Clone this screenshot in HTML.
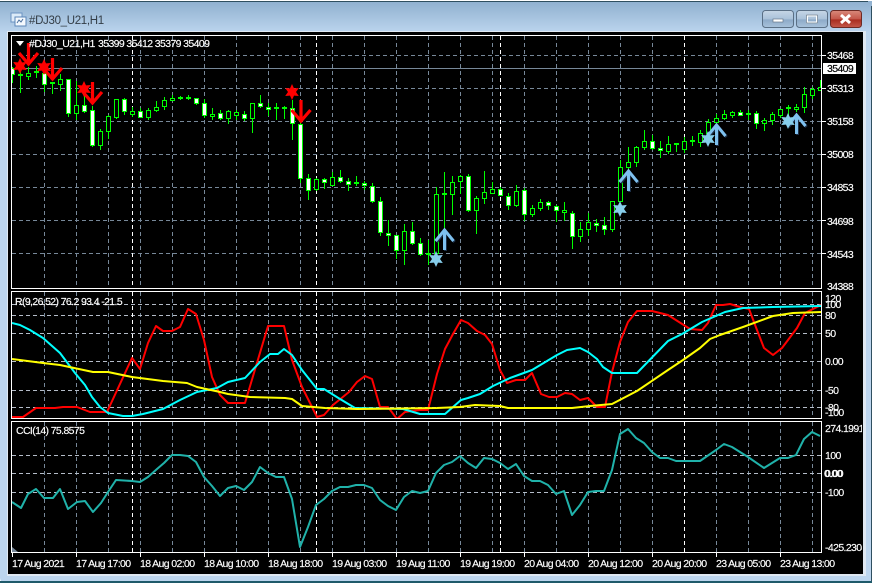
<!DOCTYPE html>
<html><head><meta charset="utf-8"><title>#DJ30_U21,H1</title>
<style>
html,body{margin:0;padding:0;background:#fff;width:874px;height:584px;overflow:hidden}
svg{display:block}
text{font-family:"Liberation Sans",sans-serif;font-size:10.5px;fill:#fff;stroke:#fff;stroke-width:.15px;letter-spacing:-.62px}
.k{fill:#000;stroke:#000}
</style></head><body>
<svg width="874" height="584" viewBox="0 0 874 584" xmlns="http://www.w3.org/2000/svg">
<defs>
<linearGradient id="tb" x1="0" y1="0" x2="0" y2="1"><stop offset="0" stop-color="#8fb0cf"/><stop offset="1" stop-color="#bcd5ee"/></linearGradient>
<linearGradient id="bt" x1="0" y1="0" x2="0" y2="1"><stop offset="0" stop-color="#c6d6e6"/><stop offset=".5" stop-color="#aac2da"/><stop offset=".55" stop-color="#8daac8"/><stop offset="1" stop-color="#a9c3dc"/></linearGradient>
<linearGradient id="cl" x1="0" y1="0" x2="0" y2="1"><stop offset="0" stop-color="#d98a7c"/><stop offset=".5" stop-color="#c4574a"/><stop offset=".55" stop-color="#a92d20"/><stop offset="1" stop-color="#c4584a"/></linearGradient>
<clipPath id="c1"><rect x="12" y="36" width="809" height="252"/></clipPath>
<clipPath id="c2"><rect x="12" y="292" width="809" height="126"/></clipPath>
<clipPath id="c3"><rect x="12" y="422" width="809" height="130"/></clipPath>
<clipPath id="c4"><rect x="822" y="420" width="40" height="140"/></clipPath>
<polygon id="star" points="0,-8 2,-3.6 6.8,-4 4,0 6.8,4 2,3.6 0,8 -2,3.6 -6.8,4 -4,0 -6.8,-4 -2,-3.6"/>
</defs>

<!-- window chrome -->
<rect width="874" height="584" fill="#fff"/>
<rect x="0" y="1" width="872" height="582" rx="5" fill="#bcd5ee"/>
<rect x="0" y="1" width="872" height="32" fill="url(#tb)"/>
<path d="M0 1.5H868M871.5 6V583M0 582.5H872" stroke="#2f4f60" fill="none"/>
<path d="M0 582H872" stroke="#1f5a6a" stroke-width="2"/>
<rect x="7" y="31" width="859" height="545" fill="#dfe8f2"/>
<rect x="8" y="32" width="855" height="542" fill="#000"/>

<!-- title icon & text -->
<g>
<rect x="11" y="13" width="11" height="9" fill="#dcebf8" stroke="#6b93c2"/>
<rect x="15" y="17" width="11" height="9" fill="#f4f9fe" stroke="#5c86b8"/>
<path d="M17 23l2-3 2 2 2-3" stroke="#4a6f9f" fill="none"/>
</g>
<text x="29" y="24" style="font-size:11.5px;fill:#333d46;stroke:none;letter-spacing:-.32px">#DJ30_U21,H1</text>

<!-- window buttons -->
<rect x="762.5" y="10.5" width="31" height="17" rx="3" fill="url(#bt)" stroke="#5a6f85"/>
<rect x="773" y="19" width="10" height="3" fill="#fff" stroke="#68788a" stroke-width=".7"/>
<rect x="796.5" y="10.5" width="31" height="17" rx="3" fill="url(#bt)" stroke="#5a6f85"/>
<rect x="807" y="15.5" width="10" height="7" fill="none" stroke="#fff" stroke-width="2"/>
<rect x="806.5" y="15" width="11" height="8" fill="none" stroke="#5f7286" stroke-width=".7"/>
<rect x="830.5" y="10.5" width="31" height="17" rx="3" fill="url(#cl)" stroke="#6d2a24"/>
<path d="M841 15l9 8M850 15l-9 8" stroke="#fff" stroke-width="3"/>

<!-- grids -->
<g fill="none" stroke="#778899" stroke-width="1" stroke-dasharray="4 3" shape-rendering="crispEdges">
<path d="M12 55.5H821M12 88.5H821M12 121.5H821M12 154.5H821M12 187.5H821M12 220.5H821M12 253.5H821"/>
<path d="M44.5 36V288M76.5 36V288M108.5 36V288M140.5 36V288M172.5 36V288M204.5 36V288M236.5 36V288M268.5 36V288M300.5 36V288M332.5 36V288M364.5 36V288M396.5 36V288M428.5 36V288M460.5 36V288M492.5 36V288M524.5 36V288M556.5 36V288M588.5 36V288M620.5 36V288M652.5 36V288M716.5 36V288M748.5 36V288M780.5 36V288M812.5 36V288"/>
<path d="M44.5 292V418M76.5 292V418M108.5 292V418M140.5 292V418M172.5 292V418M204.5 292V418M236.5 292V418M268.5 292V418M300.5 292V418M332.5 292V418M364.5 292V418M396.5 292V418M428.5 292V418M460.5 292V418M492.5 292V418M524.5 292V418M556.5 292V418M588.5 292V418M620.5 292V418M652.5 292V418M716.5 292V418M748.5 292V418M780.5 292V418M812.5 292V418"/>
<path d="M44.5 422V552M76.5 422V552M108.5 422V552M140.5 422V552M172.5 422V552M204.5 422V552M236.5 422V552M268.5 422V552M300.5 422V552M332.5 422V552M364.5 422V552M396.5 422V552M428.5 422V552M460.5 422V552M492.5 422V552M524.5 422V552M556.5 422V552M588.5 422V552M620.5 422V552M652.5 422V552M716.5 422V552M748.5 422V552M780.5 422V552M812.5 422V552"/>
</g>
<g fill="none" stroke="#b4bcc8" stroke-width="1" stroke-dasharray="4 3" shape-rendering="crispEdges">
<path d="M12 304.5H821M12 315.5H821M12 333.5H821M12 361.5H821M12 390.5H821M12 407.5H821"/>
<path d="M12 455.5H821M12 473.5H821M12 492.5H821"/>
</g>
<g fill="none" stroke="#fff" stroke-dasharray="4 3" shape-rendering="crispEdges">
<path d="M132.5 36V288M316.5 36V288M500.5 36V288M684.5 36V288M132.5 292V418M316.5 292V418M500.5 292V418M684.5 292V418M132.5 422V552M316.5 422V552M500.5 422V552M684.5 422V552"/>
</g>
<path d="M12 68.5H821" stroke="#778899" shape-rendering="crispEdges"/>

<!-- candles -->
<g clip-path="url(#c1)" shape-rendering="crispEdges">
<path fill="none" stroke="#00ff00" d="M12.5 67V83M20.5 66V93M28.5 67V80M36.5 66V78M44.5 66V92M52.5 82V94M60.5 74V91M68.5 79V117M76.5 81V120M84.5 90V113M92.5 106V147M100.5 129V150M108.5 115V139M116.5 99V119M124.5 98V115M132.5 107V117M140.5 108V118M148.5 108V120M156.5 101V112M164.5 97V110M172.5 95V101M180.5 96V100M188.5 95V100M196.5 98V105M204.5 99V118M212.5 108V120M220.5 110V120M228.5 110V124M236.5 110V120M244.5 111V121M252.5 103V133M260.5 95V108M268.5 103V116M276.5 103V120M284.5 106V119M292.5 100V140M300.5 120V183M308.5 174V200M316.5 178V191M324.5 178V189M332.5 172V186M340.5 170V183M348.5 178V191M356.5 176V186M364.5 181V190M372.5 183V203M380.5 197V236M388.5 220V246M396.5 235V259M404.5 224V265M412.5 222V245M420.5 238V256M428.5 240V265M436.5 187V255M444.5 172V240M452.5 176V215M460.5 175V194M468.5 174V212M476.5 196V234M484.5 171V204M492.5 182V193M500.5 187V196M508.5 193V210M516.5 185V207M524.5 188V221M532.5 205V217M540.5 199V211M548.5 201V210M556.5 205V222M564.5 202V221M572.5 211V249M580.5 222V242M588.5 213V236M596.5 219V232M604.5 217V235M612.5 201V232M620.5 160V202M628.5 147V170M636.5 146V167M644.5 130V150M652.5 135V150M660.5 141V158M668.5 136V154M676.5 143V152M684.5 137V153M692.5 136V146M700.5 130V147M708.5 119V135M716.5 114V124M724.5 110V120M732.5 111V118M740.5 110V116M748.5 110V120M756.5 111V129M764.5 118V131M772.5 112V125M780.5 109V118M788.5 105V118M796.5 104V112M804.5 87V113M812.5 87V99M820.5 80V90"/>
<path fill="none" stroke="#00ff00" stroke-width="2" d="M18 75H23M34 72H39M50 83H55M178 98H183M186 98H191M274 108H279M282 108H287M354 183H359M426 254H431M442 194H447M690 141H695M746 114H751M786 108H791"/>
<path fill="#000" stroke="#00ff00" d="M26.5 73.5h4v3h-4zM58.5 79.5h4v5h-4zM74.5 105.5h4v8h-4zM98.5 131.5h4v14h-4zM106.5 116.5h4v15h-4zM114.5 99.5h4v18h-4zM130.5 111.5h4v3h-4zM146.5 110.5h4v7h-4zM154.5 107.5h4v3h-4zM162.5 100.5h4v6h-4zM170.5 98.5h4v2h-4zM210.5 114.5h4v2h-4zM226.5 111.5h4v7h-4zM234.5 112.5h4v3h-4zM250.5 103.5h4v15h-4zM314.5 179.5h4v10h-4zM330.5 177.5h4v8h-4zM402.5 231.5h4v19h-4zM434.5 194.5h4v59h-4zM450.5 182.5h4v12h-4zM458.5 176.5h4v5h-4zM474.5 198.5h4v12h-4zM482.5 192.5h4v6h-4zM490.5 189.5h4v4h-4zM514.5 191.5h4v14h-4zM530.5 208.5h4v6h-4zM538.5 202.5h4v6h-4zM562.5 210.5h4v2h-4zM578.5 229.5h4v7h-4zM586.5 222.5h4v7h-4zM610.5 201.5h4v28h-4zM618.5 167.5h4v34h-4zM626.5 162.5h4v5h-4zM634.5 147.5h4v15h-4zM642.5 141.5h4v6h-4zM666.5 144.5h4v7h-4zM674.5 143.5h4v1h-4zM682.5 141.5h4v8h-4zM698.5 133.5h4v9h-4zM706.5 122.5h4v11h-4zM714.5 118.5h4v4h-4zM722.5 114.5h4v4h-4zM730.5 112.5h4v3h-4zM762.5 120.5h4v3h-4zM770.5 114.5h4v6h-4zM778.5 109.5h4v6h-4zM794.5 107.5h4v2h-4zM802.5 94.5h4v13h-4zM810.5 89.5h4v6h-4zM818.5 87.5h4v3h-4z"/>
<path fill="#fff" stroke="#00ff00" d="M10.5 68.5h4v6h-4zM42.5 73.5h4v11h-4zM66.5 79.5h4v34h-4zM82.5 105.5h4v6h-4zM90.5 110.5h4v35h-4zM122.5 99.5h4v12h-4zM138.5 111.5h4v6h-4zM194.5 98.5h4v5h-4zM202.5 103.5h4v12h-4zM218.5 113.5h4v5h-4zM242.5 114.5h4v4h-4zM258.5 103.5h4v3h-4zM266.5 107.5h4v2h-4zM290.5 108.5h4v15h-4zM298.5 124.5h4v54h-4zM306.5 178.5h4v12h-4zM322.5 179.5h4v3h-4zM338.5 177.5h4v4h-4zM346.5 181.5h4v3h-4zM362.5 183.5h4v2h-4zM370.5 186.5h4v15h-4zM378.5 201.5h4v31h-4zM386.5 233.5h4v2h-4zM394.5 235.5h4v15h-4zM410.5 231.5h4v12h-4zM418.5 243.5h4v11h-4zM466.5 176.5h4v34h-4zM498.5 189.5h4v6h-4zM506.5 196.5h4v9h-4zM522.5 190.5h4v24h-4zM546.5 202.5h4v3h-4zM554.5 206.5h4v4h-4zM570.5 213.5h4v23h-4zM594.5 223.5h4v2h-4zM602.5 225.5h4v4h-4zM650.5 141.5h4v7h-4zM658.5 148.5h4v2h-4zM738.5 112.5h4v3h-4zM754.5 113.5h4v10h-4z"/>
</g>

<!-- markers -->
<g clip-path="url(#c1)">
<g fill="#ff0000">
<use href="#star" x="20" y="66"/><use href="#star" x="44" y="67"/><use href="#star" x="84" y="89"/><use href="#star" x="292" y="92"/>
</g>
<g fill="none" stroke="#ff0000" stroke-width="3.2">
<path d="M28.5 43V62M19 53l9.5 11 9.5-11"/>
<path d="M52.5 58V77M43 68l9.5 11 9.5-11"/>
<path d="M92.5 82V101M83 92l9.5 11 9.5-11"/>
<path d="M301 100V119M291.5 110l9.5 11 9.5-11"/>
</g>
<g fill="none" stroke="#1c2f48" stroke-width="3" transform="translate(1 1)">
<path d="M444.5 232V250M435.5 241l9-11 9 11"/>
<path d="M628.5 173V191M619.5 182l9-11 9 11"/>
<path d="M716.5 127V145M707.5 136l9-11 9 11"/>
<path d="M796.5 117V134M787.5 126l9-11 9 11"/>
</g>
<g fill="none" stroke="#7ec0ee" stroke-width="3">
<path d="M444.5 232V250M435.5 241l9-11 9 11"/>
<path d="M628.5 173V191M619.5 182l9-11 9 11"/>
<path d="M716.5 127V145M707.5 136l9-11 9 11"/>
<path d="M796.5 117V134M787.5 126l9-11 9 11"/>
</g>
<g fill="#87ceeb">
<use href="#star" x="436" y="259"/><use href="#star" x="620" y="209"/><use href="#star" x="708" y="139"/><use href="#star" x="788" y="121"/>
</g>
</g>

<!-- indicator lines -->
<g clip-path="url(#c2)" fill="none" stroke-width="2" stroke-linejoin="round">
<polyline stroke="#ff0000" points="12,417 23,417 36,408 55,408 63,407 77,407 90,412 107,412 132,358 140,369 148,343 156,326 163,331 172,331 180,327 188,309 196,314 204,340 212,377 220,395 228,403 245,403 268,326 284,326 292,360 302,387 317,417 324,415 333,405 349,392 357,382 365,376 372,379 380,407 388,407 397,419 405,412 420,410 428,410 437,374 445,349 453,334 461,320 468,323 477,331 485,335 492,344 500,370 507,383 516,380 525,380 532,373 541,394 549,397 557,397 565,393 572,394 580,400 588,398 597,407 605,407 612,372 620,342 628,322 637,311 652,311 668,315 690,329 702,330 708,323 716,305 723,305 730,304 740,307 749,309 757,330 764,348 773,355 782,348 797,328 805,313 815,308 821,305"/>
<polyline stroke="#00ffff" points="12,323 20,325 30,330 43,338 60,353 75,373 85,385 92,397 100,407 108,413 123,416 132,416 143,414 163,409 180,400 197,392 217,388 228,382 245,378 260,362 270,354 278,354 284,349 292,355 302,370 317,389 324,389 340,399 355,408 403,409 420,414 445,414 461,400 468,398 480,394 493,386 510,378 532,370 557,355 567,350 580,348 588,352 597,359 603,367 612,373 637,373 668,341 682,334 702,322 725,312 743,308 773,307 821,306"/>
<polyline stroke="#ffff00" points="12,359 43,363 60,365 93,372 108,372 132,377 163,381 187,383 197,387 220,392 228,394 250,397 285,398 292,399 302,406 325,408 357,409 437,408 460,407 475,405 500,406 508,408 572,408 590,406 612,404 637,391 668,370 683,360 700,348 710,339 720,335 743,327 773,316 793,313 821,312"/>
</g>
<g clip-path="url(#c3)" fill="none" stroke-width="2" stroke-linejoin="round">
<polyline stroke="#20b2aa" points="12,502 21,508 28,494 36,489 44,498 53,498 60,489 68,509 77,502 85,501 93,512 101,503 108,492 116,480 132,481 140,482 148,477 157,469 164,463 172,455 180,455 188,456 196,462 204,477 212,486 220,496 228,488 236,486 244,490 252,482 260,467 268,473 276,477 284,477 292,499 300,547 308,527 316,505 324,499 332,491 340,487 348,487 356,485 364,485 372,488 380,500 388,506 396,510 404,497 412,491 420,493 428,491 436,473 444,465 452,462 460,456 468,463 476,468 484,458 492,459 500,463 508,469 516,464 524,476 532,481 540,481 548,485 556,494 564,491 572,515 580,505 588,492 596,491 604,491 612,470 620,434 628,429 636,438 644,443 652,452 660,458 668,458 676,461 700,461 716,450 724,444 732,447 748,457 764,468 780,458 788,458 796,455 804,439 812,432 820,436"/>
</g>

<!-- frames -->
<g fill="none" stroke="#fff" shape-rendering="crispEdges">
<rect x="11.5" y="35.5" width="810" height="253"/>
<rect x="11.5" y="291.5" width="810" height="127"/>
<rect x="11.5" y="421.5" width="810" height="131"/>
<path d="M822 55.5h4M822 88.5h4M822 121.5h4M822 154.5h4M822 187.5h4M822 220.5h4M822 253.5h4M12.5 553v4M76.5 553v4M140.5 553v4M204.5 553v4M268.5 553v4M332.5 553v4M396.5 553v4M460.5 553v4M524.5 553v4M588.5 553v4M652.5 553v4M716.5 553v4M780.5 553v4"/>
</g>
<polygon points="16,41 24,41 20,46" fill="#fff"/>
<polygon points="12,547 12,552 18,552" fill="#778899"/>

<!-- labels -->
<text x="29" y="47" style="letter-spacing:-.5px">#DJ30_U21,H1</text>
<text x="98" y="47">35399 35412 35379 35409</text>
<text x="15" y="305">R(9,26,52) 76.2 93.4 -21.5</text>
<text x="16" y="434">CCI(14) 75.8575</text>

<g>
<text x="827" y="59">35468</text>
<text x="827" y="92">35313</text>
<text x="827" y="125">35158</text>
<text x="827" y="158">35008</text>
<text x="827" y="191">34853</text>
<text x="827" y="225">34698</text>
<text x="827" y="258">34543</text>
<text x="827" y="290">34388</text>
</g>
<rect x="823" y="63" width="33" height="11" fill="#fff"/>
<text x="827" y="72" class="k">35409</text>

<g>
<text x="825" y="302">120</text>
<text x="825" y="308">100</text>
<text x="825" y="319">80</text>
<text x="825" y="337">50</text>
<text x="825" y="365">0.00</text>
<text x="825" y="394">-50</text>
<text x="825" y="411">-80</text>
<text x="825" y="416">-100</text>
</g>
<g clip-path="url(#c4)">
<text x="825" y="432">274.1991</text>
<text x="825" y="459">100</text>
<text x="824" y="477">0.00</text>
<text x="825" y="477">0.00</text>
<text x="825" y="496">-100</text>
<text x="825" y="551">-425.2304</text>
</g>

<g>
<text x="12" y="567">17 Aug 2021</text>
<text x="76" y="567">17 Aug 17:00</text>
<text x="140" y="567">18 Aug 02:00</text>
<text x="204" y="567">18 Aug 10:00</text>
<text x="268" y="567">18 Aug 18:00</text>
<text x="332" y="567">19 Aug 03:00</text>
<text x="396" y="567">19 Aug 11:00</text>
<text x="460" y="567">19 Aug 19:00</text>
<text x="524" y="567">20 Aug 04:00</text>
<text x="588" y="567">20 Aug 12:00</text>
<text x="652" y="567">20 Aug 20:00</text>
<text x="716" y="567">23 Aug 05:00</text>
<text x="780" y="567">23 Aug 13:00</text>
</g>
</svg>
</body></html>
